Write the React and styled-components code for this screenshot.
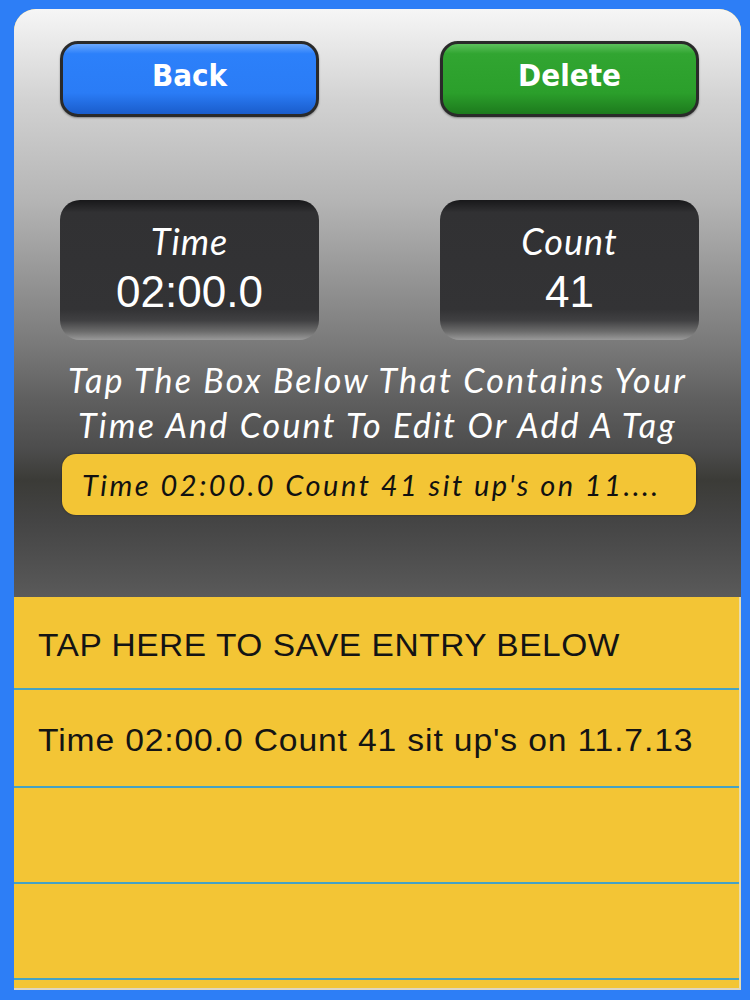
import React from 'react'
import styled, { createGlobalStyle } from "styled-components";

const GlobalStyle = createGlobalStyle`
  html, body {
    margin: 0;
    padding: 0;
    background: #2d7ef6;
  }
  * { box-sizing: border-box; }
`;

const futura = `"Lato", "Open Sans", sans-serif`;
const helvetica = `"Liberation Sans", Arial, sans-serif`;

const Screen = styled.div`
  width: 750px;
  height: 1000px;
  padding: 9px 9px 10px 14px;
  background: #2d7ef6;
`;

const Panel = styled.div`
  height: 100%;
  display: flex;
  flex-direction: column;
  border-radius: 22px 22px 0 0;
  overflow: hidden;
  background: #f3c535;
`;

// offsets below are from the top of the panel (page y - 9)
const Header = styled.div`
  height: 588px;
  flex-shrink: 0;
  display: flex;
  flex-direction: column;
  padding-top: 32px;
  background: linear-gradient(
    to bottom,
    #f6f6f6 0px,
    #d2d2d2 91px,
    #b5b5b5 191px,
    #8c8c8c 291px,
    #777777 341px,
    #5f5f5f 391px,
    #4c4c4c 441px,
    #3b3b37 471px,
    #444444 511px,
    #555555 571px,
    #5a5a5a 588px
  );
`;

const Row = styled.div`
  display: flex;
  justify-content: space-between;
  padding: 0 42px 0 46px;
`;

const Button = styled.div`
  width: 259px;
  height: 76px;
  border: 3px solid #2a2a2a;
  border-radius: 18px;
  display: flex;
  align-items: center;
  justify-content: center;
  font-family: "DejaVu Sans Condensed", "DejaVu Sans", sans-serif;
  font-weight: 700;
  font-size: 31px;
  color: #ffffff;
  padding-bottom: 8px;
  background: ${p => p.$green
    ? "linear-gradient(to bottom, #5cc05c 0%, #31a531 14%, #2b9f2b 70%, #1d7a1d 100%)"
    : "linear-gradient(to bottom, #6aa8ff 0%, #2c80fa 14%, #2a7cf6 70%, #1a5ccb 100%)"};
  box-shadow: 0 1px 2px rgba(0, 0, 0, 0.35);
`;

const Boxes = styled(Row)`
  margin-top: 83px;
`;

const Readout = styled.div`
  width: 259px;
  height: 140px;
  border-radius: 20px;
  display: flex;
  flex-direction: column;
  align-items: center;
  padding-top: 21px;
  color: #ffffff;
  background: linear-gradient(
    to bottom,
    #18181a 0%,
    #313133 9%,
    #333335 78%,
    #404042 86%,
    #6c6c6c 94%,
    #9a9a9a 100%
  );
`;

const Label = styled.div`
  font-family: ${futura};
  font-style: italic;
  font-size: 36px;
  line-height: 40px;
  letter-spacing: 1px;
`;

const Value = styled.div`
  font-family: ${helvetica};
  font-size: 44px;
  line-height: 50px;
  margin-top: 6px;
`;

const Hint = styled.div`
  margin-top: 17px;
  text-align: center;
  font-family: ${futura};
  font-style: italic;
  font-size: 34px;
  line-height: 45px;
  letter-spacing: 2.2px;
  color: #ffffff;
`;

const Tag = styled.div`
  margin: 7px 45px 0 48px;
  height: 61px;
  border-radius: 14px;
  background: #f3c535;
  box-shadow: 0 0 2px rgba(0, 0, 0, 0.5);
  display: flex;
  align-items: center;
  padding-left: 20px;
  font-family: ${futura};
  font-style: italic;
  font-size: 29px;
  letter-spacing: 2.5px;
  color: #111111;
  white-space: nowrap;
  overflow: hidden;
`;

const List = styled.div`
  flex: 1;
  display: flex;
  flex-direction: column;
  background: #f3c535;
  border-bottom: 2px solid #dcd6c4;
  border-right: 2px solid #e8dcae;
`;

const Cell = styled.div`
  height: ${p => p.$h}px;
  flex-shrink: 0;
  display: flex;
  align-items: center;
  padding: 6px 0 0 24px;
  border-bottom: 2px solid #45a2c4;
  white-space: nowrap;
`;

// the screenshot is stretched sideways, so the cell text is too
const CellText = styled.span`
  display: inline-block;
  font-family: ${helvetica};
  font-size: 31px;
  color: #141414;
  letter-spacing: ${p => p.$caps ? "0.5px" : "0.8px"};
  transform: scaleX(${p => p.$caps ? 1.08 : 1.085});
  transform-origin: left center;
`;

const rows = [
  { text: "TAP HERE TO SAVE ENTRY BELOW", h: 93, caps: true },
  { text: "Time 02:00.0 Count 41 sit up's on 11.7.13", h: 98 },
  { text: "", h: 96 },
  { text: "", h: 96 },
];

export default function App() {
  return (
    <>
      <GlobalStyle />
      <Screen>
        <Panel>
          <Header>
            <Row>
              <Button>Back</Button>
              <Button $green>Delete</Button>
            </Row>
            <Boxes>
              <Readout>
                <Label>Time</Label>
                <Value>02:00.0</Value>
              </Readout>
              <Readout>
                <Label>Count</Label>
                <Value>41</Value>
              </Readout>
            </Boxes>
            <Hint>
              Tap The Box Below That Contains Your<br />
              Time And Count To Edit Or Add A Tag
            </Hint>
            <Tag>Time 02:00.0 Count 41 sit up's on 11....</Tag>
          </Header>
          <List>
            {rows.map((r, i) => (
              <Cell key={i} $h={r.h}>
                <CellText $caps={r.caps}>{r.text}</CellText>
              </Cell>
            ))}
          </List>
        </Panel>
      </Screen>
    </>
  )
}
